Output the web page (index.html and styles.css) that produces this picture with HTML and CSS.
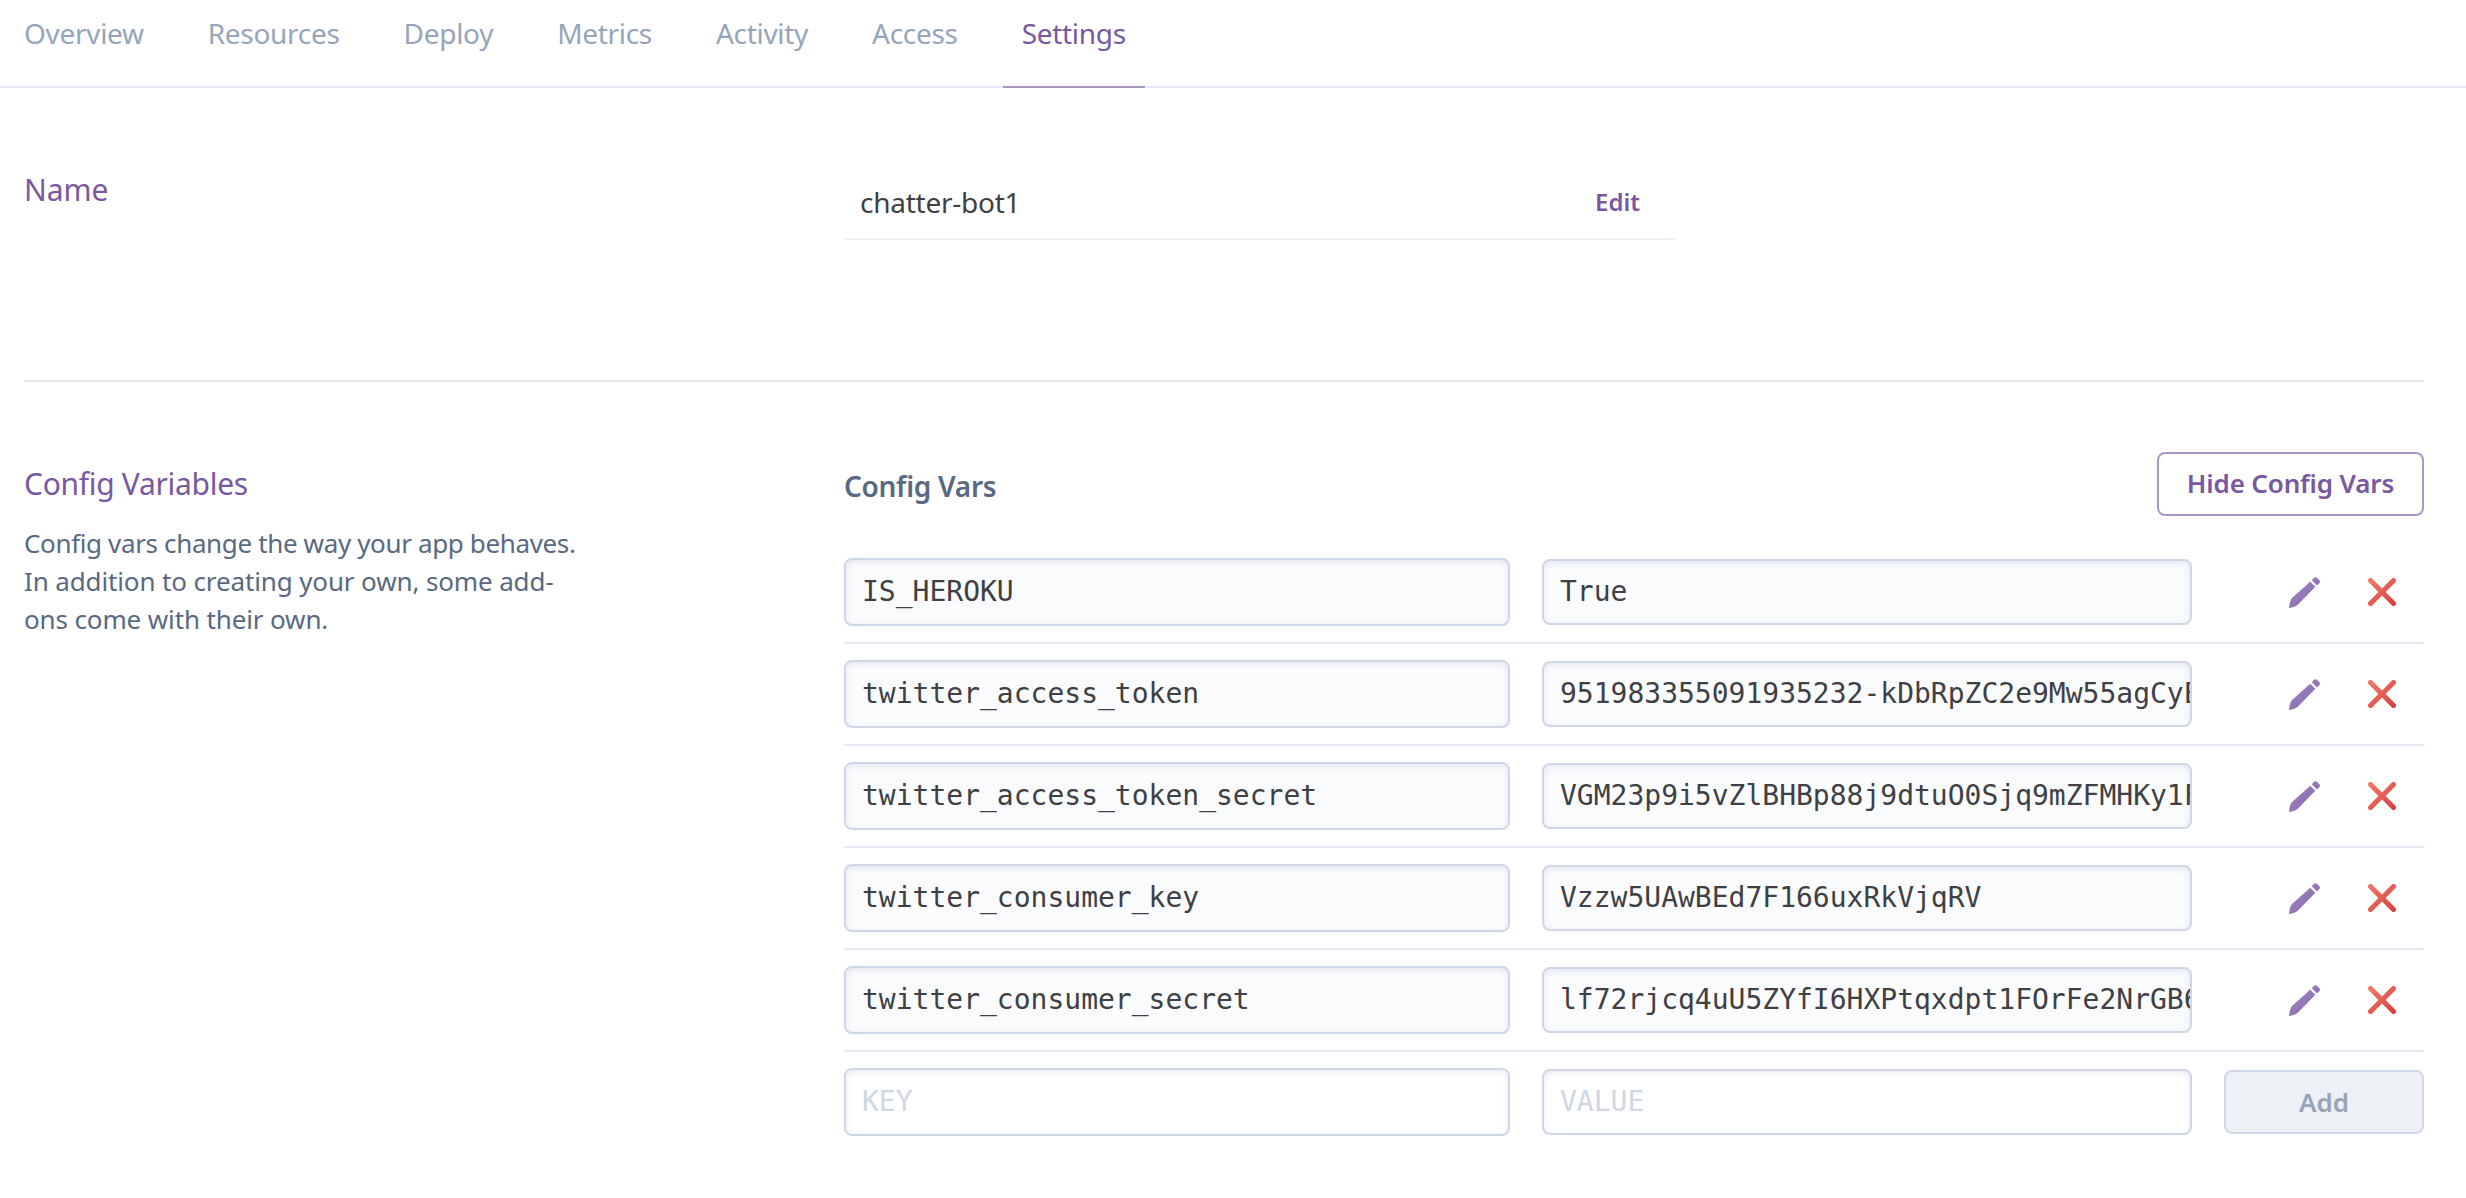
FILE: index.html
```html
<!DOCTYPE html>
<html lang="en">
<head>
<meta charset="utf-8">
<title>chatter-bot1 · Settings</title>
<link rel="stylesheet" href="styles.css">
</head>
<body>
<svg class="defs" width="0" height="0" aria-hidden="true">
  <defs>
    <linearGradient id="purple" x1="0" y1="0" x2="1" y2="1"><stop offset="0" stop-color="#a387c4"/><stop offset="1" stop-color="#8664aa"/></linearGradient>
    <linearGradient id="red" x1="0" y1="0" x2="1" y2="1"><stop offset="0" stop-color="#f37e6c"/><stop offset="1" stop-color="#d63d3d"/></linearGradient>
    <symbol id="pencil" viewBox="0 0 31 31"><path fill="url(#purple)" d="M0 31Q.6 24.500 2.500 21.500L21.200 4.700 26.300 9.800 9 27.500Q6 30.300 0 31zM22.800 3.200 24.600 1.200Q26.300-.6 28.200 1L30 2.800Q31.800 4.700 30.200 6.200L28 8.400z"/></symbol>
    <symbol id="cross" viewBox="0 0 28 28"><path fill="url(#red)" d="M.7 4.300a2.500 2.500 0 0 1 3.600-3.600L14 10.400 23.700.7a2.500 2.500 0 0 1 3.600 3.600L17.600 14l9.700 9.700a2.500 2.500 0 0 1-3.600 3.600L14 17.600l-9.700 9.700a2.500 2.500 0 0 1-3.600-3.600L10.400 14z"/></symbol>
  </defs>
</svg>
<nav class="tabs">
  <a class="tab">Overview</a>
  <a class="tab">Resources</a>
  <a class="tab">Deploy</a>
  <a class="tab">Metrics</a>
  <a class="tab">Activity</a>
  <a class="tab">Access</a>
  <a class="tab active">Settings</a>
</nav>
<main>
  <section class="section name-section">
    <div class="side"><h2 class="short">Name</h2></div>
    <div class="name-field"><span class="app-name">chatter-bot1</span><a class="edit">Edit</a></div>
  </section>
  <section class="section config-section">
    <div class="side">
      <h2>Config Variables</h2>
      <p><span class="tight">Config vars change the way your app behaves.</span><br>In addition to creating your own, some add-<br>ons come with their own.</p>
    </div>
    <div class="config">
      <header class="config-head"><h3>Config Vars</h3><button class="btn hide">Hide Config Vars</button></header>
      <div class="row">
        <div class="input key">IS_HEROKU</div><div class="input value">True</div>
        <div class="actions"><svg class="pencil"><use href="#pencil"/></svg><svg class="cross"><use href="#cross"/></svg></div>
      </div>
      <div class="row">
        <div class="input key">twitter_access_token</div><div class="input value">951983355091935232-kDbRpZC2e9Mw55agCyE</div>
        <div class="actions"><svg class="pencil"><use href="#pencil"/></svg><svg class="cross"><use href="#cross"/></svg></div>
      </div>
      <div class="row">
        <div class="input key">twitter_access_token_secret</div><div class="input value">VGM23p9i5vZlBHBp88j9dtuO0Sjq9mZFMHKy1F</div>
        <div class="actions"><svg class="pencil"><use href="#pencil"/></svg><svg class="cross"><use href="#cross"/></svg></div>
      </div>
      <div class="row">
        <div class="input key">twitter_consumer_key</div><div class="input value">Vzzw5UAwBEd7F166uxRkVjqRV</div>
        <div class="actions"><svg class="pencil"><use href="#pencil"/></svg><svg class="cross"><use href="#cross"/></svg></div>
      </div>
      <div class="row">
        <div class="input key">twitter_consumer_secret</div><div class="input value">lf72rjcq4uU5ZYfI6HXPtqxdpt1FOrFe2NrGB6</div>
        <div class="actions"><svg class="pencil"><use href="#pencil"/></svg><svg class="cross"><use href="#cross"/></svg></div>
      </div>
      <div class="row new">
        <div class="input key empty">KEY</div><div class="input value empty">VALUE</div>
        <button class="btn add">Add</button>
      </div>
    </div>
  </section>
</main>
</body>
</html>
```
FILE: styles.css
```css
* { box-sizing: border-box; }
body {
  margin: 0;
  background: #fff;
  color: #3f3f44;
  font-family: "Noto Sans", sans-serif;
  overflow: hidden;
}
h2, h3, p { margin: 0; font-weight: 400; }
.defs { display: block; height: 0; }

.tabs {
  display: flex;
  gap: 26px;
  height: 88px;
  padding-left: 5px;
  border-bottom: 2px solid #e6eaf4;
}
.tab {
  height: 88px;
  padding: 0 19px;
  font-size: 28px;
  line-height: 67px;
  letter-spacing: -0.3px;
  color: #96a5b9;
  white-space: nowrap;
}
.tab.active { color: #79589f; border-bottom: 2px solid #ab96c4; }

main { padding: 0 42px 0 24px; }
.section { display: grid; grid-template-columns: 820px 1fr; }
h2 {
  font-size: 30px;
  line-height: 40px;
  letter-spacing: -0.3px;
  color: #79589f;
}
h2.short { letter-spacing: -0.1px; }
.name-section { height: 294px; padding-top: 81px; border-bottom: 2px solid #e6eaf0; }
.name-section .side { padding-top: 1px; }
.name-field {
  display: flex;
  justify-content: space-between;
  width: 832px;
  height: 71px;
  padding: 0 36px 0 16px;
  border-bottom: 2px solid #ebf1f5;
}
.app-name { font-size: 28px; line-height: 66px; letter-spacing: -0.25px; }
.edit { font-size: 24px; line-height: 65px; font-weight: 600; color: #79589f; }

.config-section { padding-top: 70px; }
.config-section .side { padding-top: 12px; }
.config-section p {
  margin-top: 20px;
  font-size: 26px;
  line-height: 38px;
  letter-spacing: -0.13px;
  color: #596981;
  white-space: nowrap;
}
.tight { letter-spacing: -0.36px; }
.config-head { display: flex; justify-content: space-between; height: 90px; }
h3 { font-size: 28px; line-height: 68px; font-weight: 600; color: #596981; letter-spacing: -0.3px; }
.btn {
  height: 64px;
  padding: 0;
  border: 2px solid;
  border-radius: 8px;
  font: 600 26px/56px "Noto Sans", sans-serif;
}
.hide { width: 267px; padding-bottom: 3px; border-color: #ab96c4; background: #fff; color: #79589f; letter-spacing: -0.15px; }

.row {
  display: grid;
  grid-template-columns: 666px 650px 200px;
  column-gap: 32px;
  align-items: center;
  height: 102px;
  border-bottom: 2px solid #e6eaf4;
}
.row.new { border-bottom-color: transparent; }
.input {
  height: 66px;
  padding-left: 16px;
  border: 2px solid #cfd7e6;
  border-radius: 8px;
  background: #fafbfd;
  box-shadow: inset 0 2px 6px rgba(150, 165, 200, .22);
  font: 28px/62px "DejaVu Sans Mono", monospace;
  white-space: pre;
  overflow: hidden;
}
.key { height: 68px; line-height: 64px; }
.empty { background: #fff; color: #cfd7e6; }
.actions { display: flex; align-items: center; padding-left: 65px; gap: 48px; }
.pencil { width: 31px; height: 31px; }
.cross { width: 28px; height: 28px; }
.add { width: 200px; border-color: #cfd7e6; background: #edf1f6; color: #96a5b9; }
```
